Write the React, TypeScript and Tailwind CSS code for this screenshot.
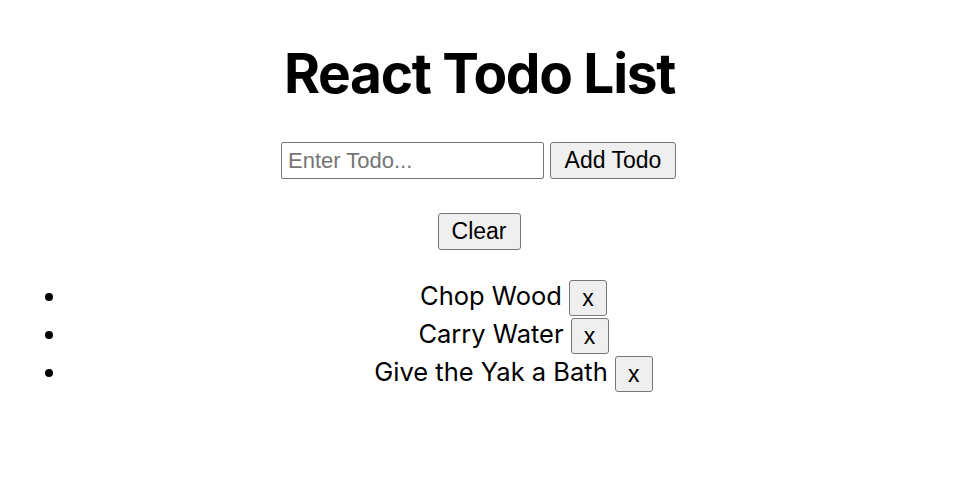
import { useState } from 'react'

const INITIAL = ['Chop Wood', 'Carry Water', 'Give the Yak a Bath']

export default function App() {
  const [todos, setTodos] = useState<string[]>(INITIAL)
  const [text, setText] = useState('')

  function addTodo() {
    if (!text.trim()) return
    setTodos([...todos, text.trim()])
    setText('')
  }

  const btn =
    "bg-[#efefef] border border-[#767676] rounded-[3px] text-black font-['Liberation_Sans',Arial,sans-serif] text-[23px] leading-none"

  return (
    <div className="min-h-[491px] bg-white text-black font-['Inter',sans-serif]">
      {/* Header */}
      <h1 className="pt-[38px] text-center text-[55px] leading-[70px] font-bold tracking-[-1.3px]">React Todo List</h1>

      {/* Input row */}
      <div className="mt-[34px] flex justify-center gap-[6px] pr-[2px]">
        <input
          value={text}
          onChange={e => setText(e.target.value)}
          placeholder="Enter Todo..."
          className="w-[263px] h-[37px] px-[6px] border border-[#767676] rounded-[2px] font-['Liberation_Sans',Arial,sans-serif] text-[22px] placeholder:text-[#757575] outline-none"
        />
        <button onClick={addTodo} className={`${btn} w-[126px] h-[37px]`}>Add Todo</button>
      </div>

      <div className="mt-[34px] flex justify-center pr-[1px]">
        <button onClick={() => setTodos([])} className={`${btn} w-[83px] h-[37px]`}>Clear</button>
      </div>

      {/* List */}
      <ul className="mt-[27px] list-disc pl-[68px] text-center text-[25.5px]">
        {todos.map((t, i) => (
          <li key={i} className="h-[38px] leading-[38px]">
            {t}
            <button
              onClick={() => setTodos(todos.filter((_, j) => j !== i))}
              className={`${btn} w-[38px] h-[36px] align-middle ml-[7px]`}
            >
              x
            </button>
          </li>
        ))}
      </ul>
    </div>
  )
}
